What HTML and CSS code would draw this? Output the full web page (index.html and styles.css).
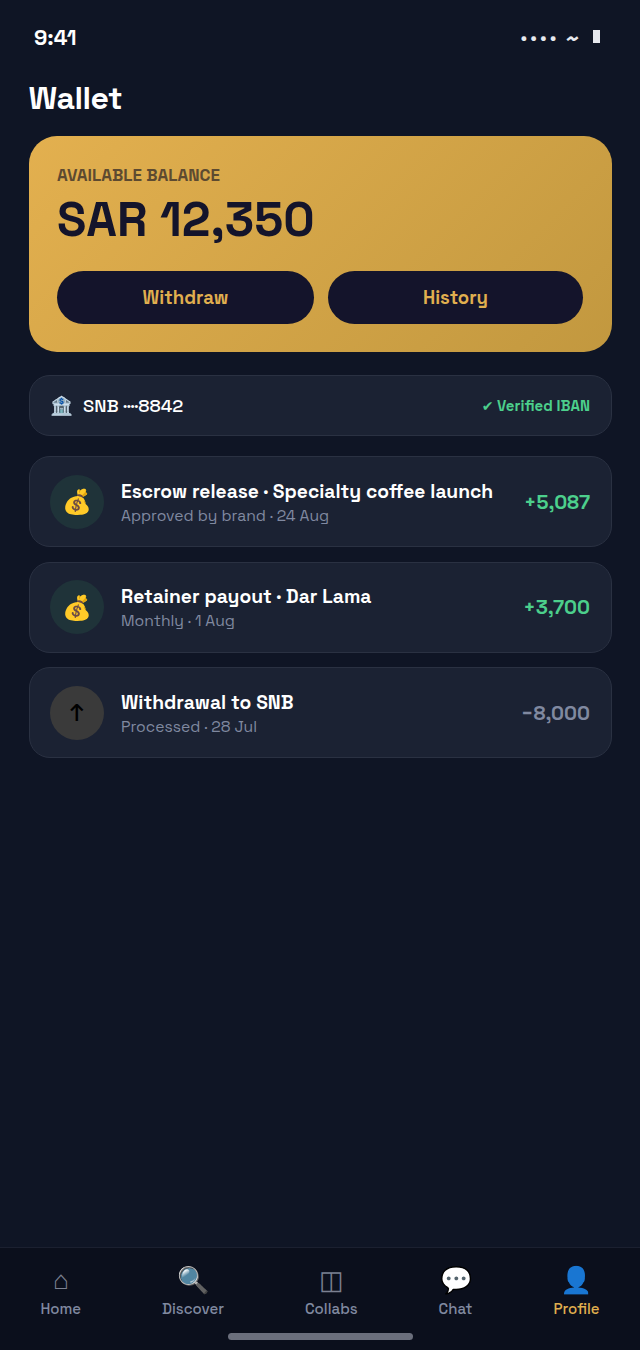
FILE: index.html
```html
<!DOCTYPE html>
<html lang="en">
<head>
    <meta charset="UTF-8">
    <meta name="viewport" content="width=device-width, initial-scale=1.0">
    <title>Wallet</title>
    <link rel="stylesheet" href="styles.css">
</head>
<body>
    <div class="phone">
        <div class="status-bar">
            <span class="status-time">9:41</span>
            <span class="status-icons">
                <span class="status-dots">••••</span>
                <span class="status-wave">~</span>
                <span class="status-battery"></span>
            </span>
        </div>

        <main class="content">
            <h1 class="page-title">Wallet</h1>

            <section class="balance-card">
                <div class="balance-label">AVAILABLE BALANCE</div>
                <div class="balance-value">SAR 12,350</div>
                <div class="balance-actions">
                    <button class="balance-btn">Withdraw</button>
                    <button class="balance-btn">History</button>
                </div>
            </section>

            <section class="bank-row">
                <div class="bank-name"><span>🏦</span><span>SNB ····8842</span></div>
                <div class="bank-status"><span class="bank-check">✔</span> Verified IBAN</div>
            </section>

            <section class="tx-list">
                <div class="tx-row">
                    <div class="tx-icon tx-icon-in">💰</div>
                    <div class="tx-text">
                        <div class="tx-title">Escrow release · Specialty coffee launch</div>
                        <div class="tx-sub">Approved by brand · 24 Aug</div>
                    </div>
                    <div class="tx-amount tx-plus">+5,087</div>
                </div>
                <div class="tx-row">
                    <div class="tx-icon tx-icon-in">💰</div>
                    <div class="tx-text">
                        <div class="tx-title">Retainer payout · Dar Lama</div>
                        <div class="tx-sub">Monthly · 1 Aug</div>
                    </div>
                    <div class="tx-amount tx-plus">+3,700</div>
                </div>
                <div class="tx-row">
                    <div class="tx-icon tx-icon-out">↑</div>
                    <div class="tx-text">
                        <div class="tx-title">Withdrawal to SNB</div>
                        <div class="tx-sub">Processed · 28 Jul</div>
                    </div>
                    <div class="tx-amount tx-minus">−8,000</div>
                </div>
            </section>
        </main>

        <nav class="tab-bar">
            <a class="tab"><span class="tab-icon tab-glyph">⌂</span><span>Home</span></a>
            <a class="tab"><span class="tab-icon">🔍</span><span>Discover</span></a>
            <a class="tab"><span class="tab-icon tab-glyph">◫</span><span>Collabs</span></a>
            <a class="tab"><span class="tab-icon">💬</span><span>Chat</span></a>
            <a class="tab tab-active"><span class="tab-icon">👤</span><span>Profile</span></a>
            <div class="home-indicator"></div>
        </nav>
    </div>
</body>
</html>
```
FILE: styles.css
```css
/* variables */
:root{
    --bg:#0f1525;
    --nav:#0b0f1c;
    --card:#1b2233;
    --line:#2a3142;
    --gold:#e0af4f;
    --ink:#14142b;
    --green:#4ccf8c;
    --muted:#8089a0;
}

*{margin:0;padding:0;box-sizing:border-box;}
body{
    background:var(--bg);
    color:#fff;
    font-family:"Space Grotesk","Inter","Noto Sans",sans-serif;
}

.phone{height:1350px;display:flex;flex-direction:column;}

/* status bar */
.status-bar{
    height:74px;padding:0 40px 0 34px;
    display:flex;justify-content:space-between;align-items:center;
}
.status-time{font-size:21.6px;font-weight:700;}
.status-icons{display:flex;align-items:center;gap:11px;color:#e6e8ee;}
.status-dots{font-size:20px;letter-spacing:2.5px;line-height:20px;margin-right:-5px;}
.status-wave{font-size:24px;font-weight:500;line-height:20px;margin-top:3px;}
.status-battery{width:7px;height:13px;background:#e6e8ee;margin-left:2px;margin-top:-2px;}

/* content */
.content{flex:1;padding:0 28.5px;}
.page-title{font-size:32px;font-weight:700;line-height:48px;margin-bottom:14px;letter-spacing:-.5px;}

.balance-card{
    height:216px;padding:29px 28.5px;border-radius:28px;
    background:linear-gradient(135deg,#e3b04f,#c2983f);
    color:var(--ink);
}
.balance-label{font-size:17px;font-weight:600;color:#5d4a30;line-height:20px;}
.balance-value{font-size:48.4px;font-weight:700;line-height:60px;margin-top:4px;}
.balance-actions{display:grid;grid-template-columns:257fr 255fr;gap:14px;margin-top:22px;}
.balance-btn{
    height:53px;border:none;border-radius:27px;
    background:var(--ink);color:var(--gold);
    font:700 18.6px "Space Grotesk","Inter","Noto Sans",sans-serif;
}

.bank-row{
    height:61px;margin-top:23px;padding:0 20.5px;
    display:flex;justify-content:space-between;align-items:center;
    background:var(--card);border:1px solid var(--line);border-radius:21px;
}
.bank-name{display:flex;align-items:center;gap:10px;font-size:18.4px;font-weight:500;}
.bank-status{font-size:15px;font-weight:600;color:var(--green);}
.bank-check{font-family:"DejaVu Sans",sans-serif;font-size:14px;}

.tx-list{margin-top:20.3px;display:flex;flex-direction:column;gap:14.4px;}
.tx-row{
    height:91px;padding:0 20.5px;
    display:flex;align-items:center;gap:17px;
    background:var(--card);border:1px solid var(--line);border-radius:21px;
}
.tx-icon{
    width:54px;height:54px;border-radius:50%;flex-shrink:0;
    display:flex;align-items:center;justify-content:center;font-size:24px;
}
.tx-icon-in{background:#1f3339;}
.tx-icon-out{background:#3a3a3a;color:#000;font-weight:500;}
.tx-text{flex:1;min-width:0;padding-top:4px;}
.tx-title{font-size:19.25px;font-weight:700;line-height:24px;white-space:nowrap;}
.tx-sub{font-size:15.7px;color:var(--muted);line-height:24px;}
.tx-amount{font-size:20px;font-weight:700;}
.tx-plus{color:var(--green);}
.tx-minus{color:var(--muted);}

/* tab bar */
.tab-bar{
    position:relative;height:103px;padding:16px 0 0;
    display:flex;justify-content:space-around;
    background:var(--nav);border-top:1px solid #1b2030;
}
.tab{
    display:flex;flex-direction:column;align-items:center;gap:3px;
    font-size:15px;font-weight:500;color:var(--muted);
}
.tab-icon{font-size:26px;line-height:32px;}
.tab-glyph{color:#7b8091;}
.tab-active{color:var(--gold);}
.home-indicator{
    position:absolute;left:228px;bottom:10px;
    width:185px;height:7px;border-radius:4px;background:#6b6f7c;
}
```
